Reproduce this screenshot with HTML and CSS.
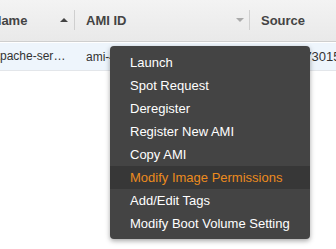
FILE: index.html
```html
<!DOCTYPE html>
<html>
<head>
<meta charset="utf-8">
<link rel="stylesheet" href="styles.css">
</head>
<body>
<div class="grid">
  <div class="head">
    <div class="hcell"><span class="label">Name</span><span class="arrow up"></span><span class="sep"></span></div>
    <div class="hcell"><span class="label">AMI ID</span><span class="arrow down"></span><span class="sep"></span></div>
    <div class="hcell"><span class="label">Source</span></div>
  </div>
  <div class="row">
    <div class="cell c1">Apache-server-2016</div>
    <div class="cell">ami-4c3a2f1e</div>
    <div class="cell c3">1234567301526/apache</div>
  </div>
</div>
<ul class="menu">
  <li>Launch</li>
  <li>Spot Request</li>
  <li>Deregister</li>
  <li>Register New AMI</li>
  <li>Copy AMI</li>
  <li class="active">Modify Image Permissions</li>
  <li>Add/Edit Tags</li>
  <li>Modify Boot Volume Setting</li>
</ul>
</body>
</html>
```
FILE: styles.css
```css
html, body {
  margin: 0;
  padding: 0;
  background: #fff;
  overflow: hidden;
  width: 336px;
  height: 249px;
  font-family: "Liberation Sans", Arial, sans-serif;
}
.grid {
  margin-left: -19px;
  width: 400px;
}
.head, .row {
  display: grid;
  grid-template-columns: 94px 175px 1fr;
}
.head {
  height: 41px;
  background: linear-gradient(#f3f3f3, #e9e9e9);
  border-bottom: 1px solid #cfcfcf;
}
.hcell {
  display: flex;
  align-items: center;
  padding-left: 11px;
  font-size: 13px;
  font-weight: bold;
  color: #444;
  margin-top: -1px;
}
.label {
  flex: 1;
  white-space: nowrap;
}
.arrow {
  width: 0;
  height: 0;
  border-left: 4px solid transparent;
  border-right: 4px solid transparent;
}
.arrow.up {
  border-bottom: 4px solid #444;
  margin-right: 6px;
}
.arrow.down {
  border-top: 4px solid #aaa;
  margin-right: 5px;
}
.sep {
  width: 1px;
  height: 20px;
  background: #cfcfcf;
}
.row {
  height: 27px;
  margin-top: 1px;
  background: #eef5fc;
  border-bottom: 1px solid #e3e6ea;
}
.cell {
  display: flex;
  align-items: center;
  padding-left: 11px;
  font-size: 12px;
  color: #333;
  white-space: nowrap;
  overflow: hidden;
}
.c1 {
  display: block;
  line-height: 27px;
  padding-right: 9px;
  text-overflow: ellipsis;
}
.c3 {
  font-size: 13px;
}
.menu {
  position: absolute;
  left: 110px;
  top: 46px;
  width: 200px;
  margin: 0;
  padding: 5px 0 4px;
  list-style: none;
  background: #444;
  border-radius: 4px;
  box-shadow: 0 2px 5px rgba(0, 0, 0, 0.35);
}
.menu li {
  height: 23px;
  line-height: 23px;
  padding-left: 20px;
  font-size: 13px;
  color: #fff;
  white-space: nowrap;
}
.menu li.active {
  background: #373737;
  color: #ec8b1e;
}
```
